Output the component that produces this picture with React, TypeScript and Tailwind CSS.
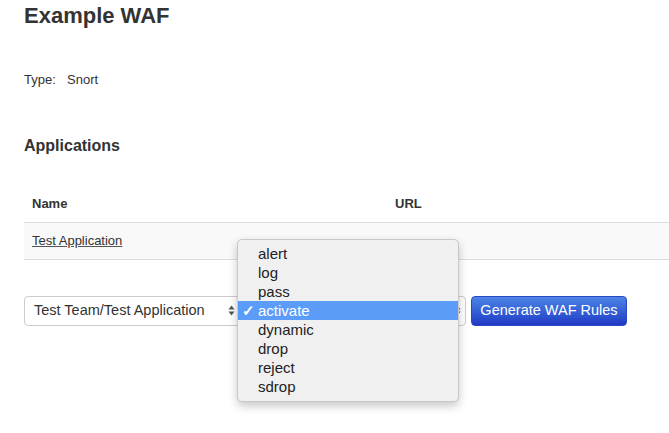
import React from 'react';

const options = ['alert', 'log', 'pass', 'activate', 'dynamic', 'drop', 'reject', 'sdrop'];

function SelectArrows() {
  return (
    <svg width="7" height="11" viewBox="0 0 7 11" className="text-[#555]">
      <path d="M3.5 0.5 L6.5 4.5 L0.5 4.5 Z" fill="currentColor" />
      <path d="M3.5 10.5 L6.5 6.5 L0.5 6.5 Z" fill="currentColor" />
    </svg>
  );
}

export default function App() {
  return (
    <div className="relative min-h-[433px] bg-white text-[#333] font-['Liberation_Sans',Arial,sans-serif] overflow-hidden">
      <div className="px-[24px]">
        <h1 className="pt-[3px] text-[22px] leading-[26px] font-bold text-[#333]">Example WAF</h1>

        <div className="mt-[43px] flex text-[13px] leading-[16px]">
          <span className="w-[43px]">Type:</span>
          <span>Snort</span>
        </div>

        <h2 className="mt-[48px] text-[16px] leading-[20px] font-bold">Applications</h2>

        <table className="mt-[29px] w-[calc(100%+24px)] text-[13px] border-collapse">
          <thead>
            <tr className="border-b border-[#dddddd]">
              <th className="w-[371px] h-[37px] pl-[8px] text-left font-bold align-middle">Name</th>
              <th className="text-left font-bold align-middle">URL</th>
            </tr>
          </thead>
          <tbody>
            <tr className="bg-[#f9f9f9] border-b border-[#dddddd]">
              <td className="h-[37px] pl-[8px] align-middle">
                <a href="#" className="underline text-[#333] decoration-[#555]">Test Application</a>
              </td>
              <td></td>
            </tr>
          </tbody>
        </table>

        <div className="mt-[36px] flex items-center">
          <div className="w-[221px] h-[30px] flex items-center justify-between pl-[9px] pr-[9px] border border-[#cccccc] rounded-[4px] bg-white text-[14.5px]">
            <span>Test Team/Test Application</span>
            <SelectArrows />
          </div>
          <div className="ml-[5px] w-[216px] h-[30px] flex items-center justify-end pr-[4px] border border-[#cccccc] rounded-[4px] bg-white text-[14.5px]">
            <SelectArrows />
          </div>
          <button className="ml-[5px] w-[156px] h-[30px] rounded-[4px] border border-[#2a47c4] bg-gradient-to-b from-[#4d84e6] to-[#2338c6] text-white text-[14.5px] flex items-center justify-center">
            Generate WAF Rules
          </button>
        </div>
      </div>

      <div className="absolute left-[237px] top-[239px] w-[222px] pt-[4px] pb-[5px] bg-[#f0f0f0] rounded-[5px] border border-[#c8c8c8] shadow-[0_4px_10px_rgba(0,0,0,0.22)] text-[15px] text-[#222]">
        {options.map((o) => (
          <div
            key={o}
            className={
              o === 'activate'
                ? 'relative h-[19px] leading-[19px] pl-[20px] bg-[#5c9cf9] text-white'
                : 'relative h-[19px] leading-[19px] pl-[20px]'
            }
          >
            {o === 'activate' && <span className="absolute left-[4px] top-0 font-bold">✓</span>}
            {o}
          </div>
        ))}
      </div>
    </div>
  );
}
